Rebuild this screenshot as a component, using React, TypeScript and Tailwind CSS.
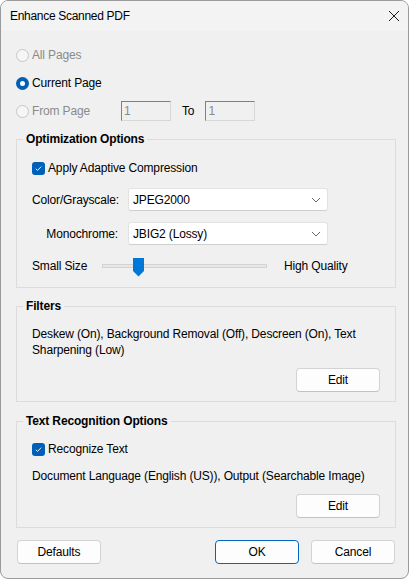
import React from "react";

const font = { fontFamily: '"Liberation Sans", Arial, sans-serif' };

function Radio({ checked, disabled, label }: { checked?: boolean; disabled?: boolean; label: string }) {
  return (
    <div className="flex items-center h-[20px]">
      {checked ? (
        <div className="w-[13px] h-[13px] rounded-full bg-[#005fb8] flex items-center justify-center">
          <div className="w-[5px] h-[5px] rounded-full bg-white" />
        </div>
      ) : (
        <div className="w-[13px] h-[13px] rounded-full border border-[#c6c6c6] bg-[#f6f6f6]" />
      )}
      <span className={"ml-[3px] " + (disabled ? "text-[#8a8a8a]" : "text-black")}>{label}</span>
    </div>
  );
}

function Check({ label }: { label: string }) {
  return (
    <div className="flex items-center h-[16px]">
      <div className="w-[13px] h-[13px] rounded-[3px] bg-[#005fb8] flex items-center justify-center">
        <svg width="9" height="9" viewBox="0 0 9 9">
          <path d="M1.8 4.8 L3.6 6.4 L7.2 2.6" stroke="white" strokeWidth="0.9" fill="none" />
        </svg>
      </div>
      <span className="ml-[3px] text-black">{label}</span>
    </div>
  );
}

function DisabledInput() {
  return (
    <div className="w-[50px] h-[20px] bg-[#f0f0f0] border-l border-t border-l-[#808080] border-t-[#808080] border-r border-b border-r-[#d8d8d8] border-b-[#d8d8d8] flex items-center pl-[2px] text-[#8a8a8a]">
      1
    </div>
  );
}

function Select({ value }: { value: string }) {
  return (
    <div className="w-[200px] h-[23px] bg-white border border-[#e2e2e2] border-b-[#cfcfcf] rounded-[3px] flex items-center justify-between pl-[4px] pr-[6px] text-black">
      <span>{value}</span>
      <svg width="10" height="6" viewBox="0 0 10 6">
        <path d="M1 1 L5 5 L9 1" stroke="#6a6a6a" strokeWidth="1" fill="none" />
      </svg>
    </div>
  );
}

function Button({ label, primary }: { label: string; primary?: boolean }) {
  return (
    <div
      className={
        "w-[84px] h-[24px] shrink-0 bg-[#fdfdfd] rounded-[4px] border flex items-center justify-center text-black " +
        (primary ? "border-[#0067c0]" : "border-[#d3d3d3] border-b-[#c2c2c2]")
      }
    >
      {label}
    </div>
  );
}

function Group({ title, children, className }: { title: string; children: React.ReactNode; className?: string }) {
  return (
    <div className={"relative shrink-0 w-[380px] border border-[#dcdcdc] " + (className || "")}>
      <div className="absolute left-[6px] top-[-9px] px-[3px] bg-[#f0f0f0] font-bold leading-[16px] text-black">
        {title}
      </div>
      {children}
    </div>
  );
}

export default function App() {
  return (
    <div style={font} className="w-[409px] h-[579px] bg-white text-[12px] leading-[16px] tracking-[-0.15px]">
      <div className="w-[409px] h-[579px] box-border border border-[#9a9a9a] rounded-[8px] bg-[#f0f0f0] overflow-hidden flex flex-col">
        <div className="h-[30px] shrink-0 bg-[#f3f3f3] flex items-center justify-between pl-[9px] pr-[8px]">
          <span className="text-black tracking-[-0.3px]">Enhance Scanned PDF</span>
          <svg width="12" height="12" viewBox="0 0 12 12">
            <path d="M1 1 L11 11 M11 1 L1 11" stroke="#1a1a1a" strokeWidth="1" />
          </svg>
        </div>
        <div className="pl-[15px] flex flex-col">
          <div className="mt-[14px]">
            <Radio disabled label="All Pages" />
          </div>
          <div className="mt-[8px]">
            <Radio checked label="Current Page" />
          </div>
          <div className="mt-[8px] h-[20px] flex items-center">
            <div className="w-[105px]">
              <Radio disabled label="From Page" />
            </div>
            <DisabledInput />
            <span className="ml-[11px] mr-[11px] text-black">To</span>
            <DisabledInput />
          </div>

          <Group title="Optimization Options" className="mt-[18px] pl-[15px] pt-[20px] pb-[11px]">
            <Check label="Apply Adaptive Compression" />
            <div className="mt-[12px] flex items-center">
              <span className="w-[96px] text-black">Color/Grayscale:</span>
              <Select value="JPEG2000" />
            </div>
            <div className="mt-[11px] flex items-center">
              <span className="w-[96px] pr-[10px] text-right text-black">Monochrome:</span>
              <Select value="JBIG2 (Lossy)" />
            </div>
            <div className="mt-[11px] h-[20px] flex items-center">
              <span className="w-[70px] text-black">Small Size</span>
              <div className="relative w-[165px] h-[4px] bg-[#e6e8e8] border border-[#d2d4d4]">
                <svg className="absolute left-[30px] top-[-7px]" width="11" height="19" viewBox="0 0 11 19">
                  <path d="M0 0 H11 V13 L5.5 18.5 L0 13 Z" fill="#0078d7" />
                </svg>
              </div>
              <span className="ml-[17px] text-black">High Quality</span>
            </div>
          </Group>

          <Group title="Filters" className="mt-[18px] pl-[15px] pt-[19px] pb-[9px]">
            <div className="text-black pr-[20px]">
              Deskew (On), Background Removal (Off), Descreen (On), Text Sharpening (Low)
            </div>
            <div className="mt-[10px] flex justify-end pr-[15px]">
              <Button label="Edit" />
            </div>
          </Group>

          <Group title="Text Recognition Options" className="mt-[19px] pl-[15px] pt-[19px] pb-[9px]">
            <Check label="Recognize Text" />
            <div className="mt-[11px] text-black">
              Document Language (English (US)), Output (Searchable Image)
            </div>
            <div className="mt-[10px] flex justify-end pr-[15px]">
              <Button label="Edit" />
            </div>
          </Group>

          <div className="mt-[12px] w-[380px] shrink-0 flex items-center pl-[1px]">
            <Button label="Defaults" />
            <div className="ml-auto flex gap-[12px] pr-[1px]">
              <Button label="OK" primary />
              <Button label="Cancel" />
            </div>
          </div>
        </div>
      </div>
    </div>
  );
}
